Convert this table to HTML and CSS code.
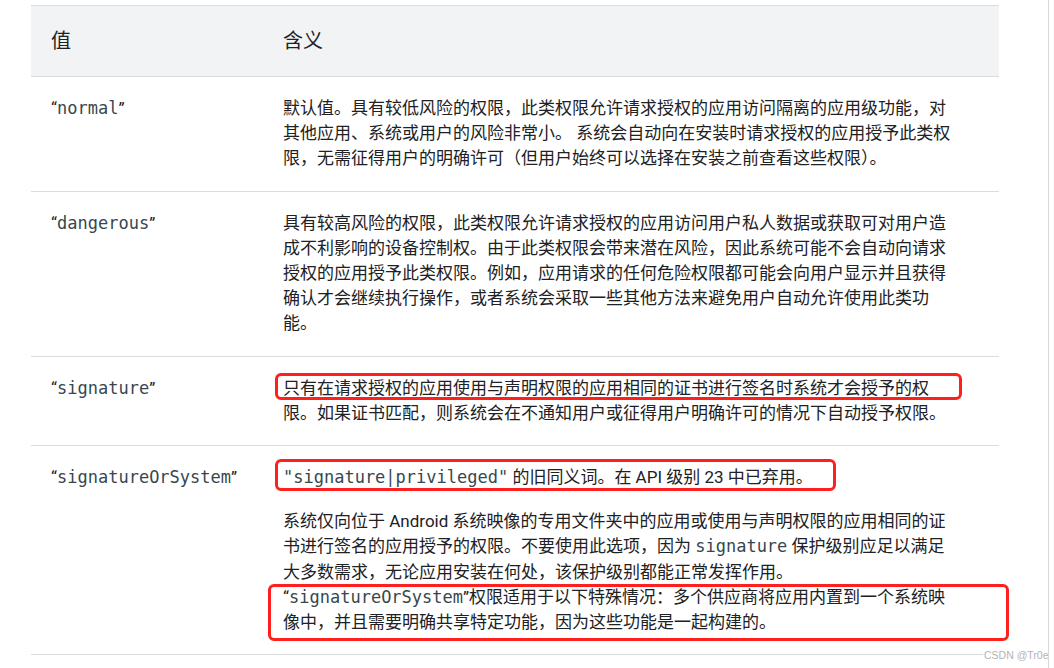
FILE: index.html
```html
<!DOCTYPE html>
<html lang="zh-CN">
<head>
<meta charset="utf-8">
<title>权限保护级别</title>
<link rel="stylesheet" href="styles.css">
</head>
<body>
<div class="page">
  <table class="levels">
    <colgroup>
      <col class="col-value">
      <col class="col-meaning">
    </colgroup>
    <thead>
      <tr>
        <th>值</th>
        <th>含义</th>
      </tr>
    </thead>
    <tbody>
      <tr>
        <td class="value">“<code>normal</code>”</td>
        <td class="meaning">默认值。具有较低风险的权限，此类权限允许请求授权的应用访问隔离的应用级功能，对其他应用、系统或用户的风险非常小。 系统会自动向在安装时请求授权的应用授予此类权限，无需征得用户的明确许可（但用户始终可以选择在安装之前查看这些权限）。</td>
      </tr>
      <tr>
        <td class="value">“<code>dangerous</code>”</td>
        <td class="meaning">具有较高风险的权限，此类权限允许请求授权的应用访问用户私人数据或获取可对用户造成不利影响的设备控制权。由于此类权限会带来潜在风险，因此系统可能不会自动向请求授权的应用授予此类权限。例如，应用请求的任何危险权限都可能会向用户显示并且获得确认才会继续执行操作，或者系统会采取一些其他方法来避免用户自动允许使用此类功能。</td>
      </tr>
      <tr>
        <td class="value">“<code>signature</code>”</td>
        <td class="meaning">只有在请求授权的应用使用与声明权限的应用相同的证书进行签名时系统才会授予的权限。如果证书匹配，则系统会在不通知用户或征得用户明确许可的情况下自动授予权限。</td>
      </tr>
      <tr>
        <td class="value">“<code>signatureOrSystem</code>”</td>
        <td class="meaning">
          <p class="first"><code>"signature|privileged"</code> 的旧同义词。在 API 级别 23 中已弃用。</p>
          <p class="second">系统仅向位于 Android 系统映像的专用文件夹中的应用或使用与声明权限的应用相同的证书进行签名的应用授予的权限。不要使用此选项，因为 <code>signature</code> 保护级别应足以满足大多数需求，无论应用安装在何处，该保护级别都能正常发挥作用。<br>“<code>signatureOrSystem</code>”权限适用于以下特殊情况：多个供应商将应用内置到一个系统映像中，并且需要明确共享特定功能，因为这些功能是一起构建的。</p>
        </td>
      </tr>
    </tbody>
  </table>

  <div class="mark mark-signature"></div>
  <div class="mark mark-deprecated"></div>
  <div class="mark mark-special"></div>

  <div class="watermark">CSDN @Tr0e</div>
</div>
</body>
</html>
```

FILE: styles.css
```css
html, body {
  margin: 0;
  padding: 0;
  background: #ffffff;
}

.page {
  position: relative;
  width: 1049px;
  height: 668px;
  border-right: 1px solid #d9d9d9;
  padding: 5px 0 0 31px;
  box-sizing: border-box;
  overflow: hidden;
  font-family: Roboto, "Noto Sans CJK SC", sans-serif;
  color: #202124;
}

.levels {
  width: 968px;
  table-layout: fixed;
  border-collapse: collapse;
  border-spacing: 0;
}

.col-value {
  width: 232px;
}

.col-meaning {
  width: 736px;
}

.levels th {
  background: #f1f3f4;
  border-top: 1px solid #dadce0;
  border-bottom: 1px solid #dadce0;
  padding: 22px 20px;
  font-size: 20px;
  line-height: 26px;
  font-weight: 400;
  text-align: left;
}

.levels td {
  border-bottom: 1px solid #dadce0;
  padding: 19px 20px;
  font-size: 17px;
  line-height: 25.2px;
  vertical-align: top;
}

.levels td.meaning {
  padding-right: 47px;
}

code {
  font-family: "DejaVu Sans Mono", monospace;
  font-size: 17px;
  line-height: 1;
  color: #37474f;
}

.meaning p {
  margin: 0;
}

.meaning p.first {
  margin-bottom: 19px;
}

.mark {
  position: absolute;
  box-sizing: border-box;
  border: 3px solid #ff1f1f;
  border-radius: 6px;
}

.mark-signature {
  left: 275px;
  top: 373px;
  width: 687px;
  height: 27px;
}

.mark-deprecated {
  left: 275px;
  top: 459px;
  width: 561px;
  height: 32px;
}

.mark-special {
  left: 268px;
  top: 584px;
  width: 741px;
  height: 57px;
}

.watermark {
  position: absolute;
  left: 983px;
  top: 648px;
  white-space: nowrap;
  font-family: "Liberation Sans", Arial, sans-serif;
  font-size: 10.5px;
  line-height: 14px;
  color: #b4b4b4;
  background: #ffffff;
  padding: 0 1px;
}
```
